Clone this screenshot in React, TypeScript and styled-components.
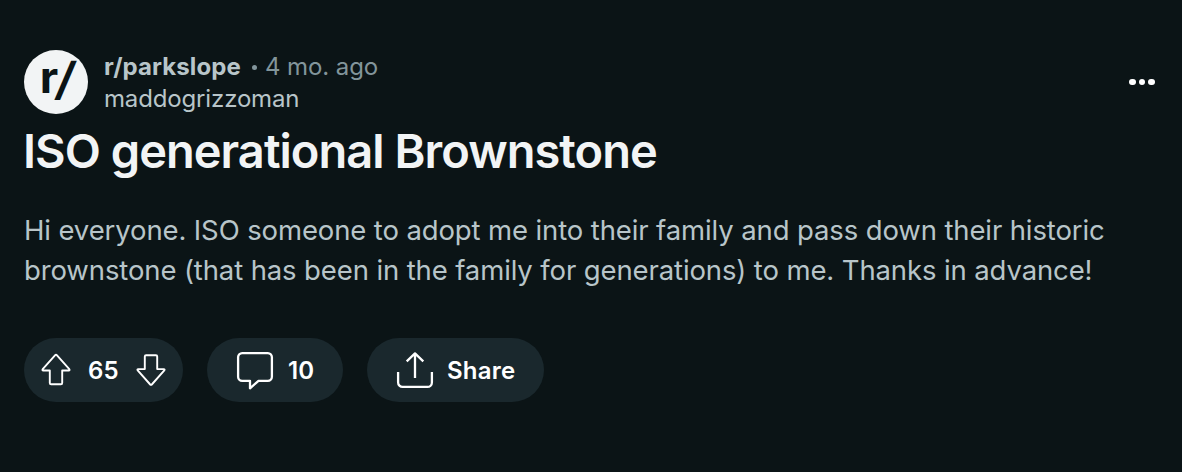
import React from "react";
import styled, { createGlobalStyle } from "styled-components";

const GlobalStyle = createGlobalStyle`
    * {
        box-sizing: border-box;
    }
    body {
        margin: 0;
        background-color: #0b1416;
        font-family: Inter, "Liberation Sans", sans-serif;
    }
    h1,
    p {
        margin: 0;
    }
`;

const PostStyle = styled.article`
    height: 472px;
    padding: 50px 24px 0;
    overflow: hidden;
    background-color: #0b1416;
`;

const Header = styled.header`
    display: flex;
    height: 64px;
    align-items: center;
`;

const Avatar = styled.svg`
    width: 64px;
    height: 64px;
    margin-right: 16px;
    flex: none;
    font-family: Inter, "Liberation Sans", sans-serif;
    font-weight: 700;
`;

const Credit = styled.div`
    flex: 1;
    padding-top: 2px;
    font-size: 24px;
    line-height: 32px;
    white-space: nowrap;
`;

const CreditLine = styled.div`
    display: flex;
    align-items: center;
    height: 32px;
`;

const Community = styled.span`
    font-weight: 700;
    letter-spacing: 0.1px;
    color: #b8c5c9;
`;

const Dot = styled.span`
    width: 5px;
    height: 5px;
    margin: 1px 8px 0 11px;
    border-radius: 50%;
    background-color: #82959b;
`;

const Time = styled.span`
    letter-spacing: -0.08px;
    color: #82959b;
`;

const Author = styled.span`
    letter-spacing: -0.15px;
    color: #b8c5c9;
`;

const MoreButton = styled.button`
    display: flex;
    gap: 3px;
    padding: 0;
    margin-right: 3px;
    border: 0;
    background: none;
    span {
        width: 6.7px;
        height: 6.7px;
        border-radius: 50%;
        background-color: #fff;
    }
`;

const Title = styled.h1`
    margin: 7px 0 0 -1px;
    font-size: 47px;
    line-height: 60px;
    font-weight: 600;
    letter-spacing: -0.96px;
    color: #f2f4f5;
    white-space: nowrap;
`;

const Body = styled.p`
    margin-top: 29px;
    font-size: 27.5px;
    line-height: 40px;
    letter-spacing: -0.12px;
    color: #b8c5c9;
    white-space: nowrap;
`;

const Actions = styled.div`
    display: flex;
    gap: 24px;
    margin-top: 48px;
`;

const Pill = styled.div<{ $width: number; $pad: number; $gap: number }>`
    display: flex;
    align-items: center;
    gap: ${({ $gap }) => $gap}px;
    width: ${({ $width }) => $width}px;
    height: 64px;
    padding-left: ${({ $pad }) => $pad}px;
    border-radius: 32px;
    background-color: #1a282d;
    color: #fff;
    font-size: 24px;
    font-weight: 600;
    white-space: nowrap;
    svg {
        flex: none;
        fill: none;
        stroke: #fff;
    }
`;

const Label = styled.span<{ $width: number }>`
    width: ${({ $width }) => $width}px;
    letter-spacing: 0.2px;
    line-height: 32px;
    padding-top: 2px;
`;

const body = [
    "Hi everyone. ISO someone to adopt me into their family and pass down their historic",
    "brownstone (that has been in the family for generations) to me. Thanks in advance!",
];

const ArrowIcon = ({ down }: { down?: boolean }) => (
    <svg width="30" height="40" viewBox="0 0 30 40" strokeWidth="1.9">
        <path
            transform={down ? "rotate(180 15 19.8)" : undefined}
            strokeLinejoin="round"
            d="M14.2 5.1a1.1 1.1 0 0 1 1.6 0L28.3 19.2q.8 1.3-.6 1.3H21.2V33q0 1.3-1.3 1.3H10.1Q8.8 34.3 8.8 33V20.5H2.3q-1.4 0-.6-1.3z"
        />
    </svg>
);

const CommentIcon = () => (
    <svg width="38" height="40" viewBox="0 0 38 40" strokeWidth="2.3">
        <path
            strokeLinejoin="round"
            d="M6.2 3.1h25.6a4.1 4.1 0 0 1 4.1 4.1v19.5a4.1 4.1 0 0 1-4.1 4.1h-9.3L14 38.3v-7.5H6.2a4.1 4.1 0 0 1-4.1-4.1V7.2a4.1 4.1 0 0 1 4.1-4.1z"
        />
    </svg>
);

const ShareIcon = () => (
    <svg width="38" height="40" viewBox="0 0 38 40" strokeWidth="2.3">
        <path d="M2.1 22v10.4a4.5 4.5 0 0 0 4.5 4.5h24.8a4.5 4.5 0 0 0 4.5-4.5V22" />
        <path d="M10.7 11.3L19 3.4l8.3 7.9M19 3.4V28" strokeLinejoin="round" />
    </svg>
);

const App = () => {
    return (
        <PostStyle>
            <GlobalStyle />
            <Header>
                <Avatar viewBox="0 0 64 64">
                    <circle cx="32" cy="32" r="32" fill="#f2f4f5" />
                    <text
                        fontSize="42"
                        fill="#0b1416"
                        transform="translate(15.7 43.3) scale(1.08 1.04)"
                    >
                        r
                    </text>
                    <text
                        fontSize="45"
                        fill="#0b1416"
                        transform="translate(30.5 45) skewX(-9)"
                    >
                        /
                    </text>
                </Avatar>
                <Credit>
                    <CreditLine>
                        <Community>r/parkslope</Community>
                        <Dot />
                        <Time>4 mo. ago</Time>
                    </CreditLine>
                    <CreditLine>
                        <Author>maddogrizzoman</Author>
                    </CreditLine>
                </Credit>
                <MoreButton aria-label="More options">
                    <span />
                    <span />
                    <span />
                </MoreButton>
            </Header>
            <Title>ISO generational Brownstone</Title>
            <Body>
                {body.map((line, idx) => (
                    <React.Fragment key={idx}>
                        {line}
                        <br />
                    </React.Fragment>
                ))}
            </Body>
            <Actions>
                <Pill $width={159} $pad={17} $gap={17}>
                    <ArrowIcon />
                    <Label $width={31}>65</Label>
                    <ArrowIcon down />
                </Pill>
                <Pill $width={136} $pad={29} $gap={14}>
                    <CommentIcon />
                    <Label $width={40}>10</Label>
                </Pill>
                <Pill $width={177} $pad={29} $gap={13}>
                    <ShareIcon />
                    <Label $width={70}>Share</Label>
                </Pill>
            </Actions>
        </PostStyle>
    );
};

export default App;
